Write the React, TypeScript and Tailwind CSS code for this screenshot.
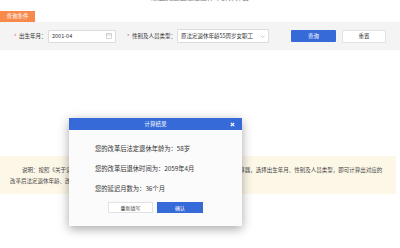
import React from "react";

export default function App() {
  return (
    <div
      className="relative w-[400px] h-[248px] overflow-hidden bg-white text-[#333]"
      style={{ fontFamily: '"Noto Sans CJK SC", "Noto Sans", sans-serif' }}
    >
      {/* title (cut off) */}
      <div className="h-[11px] overflow-hidden flex justify-center">
        <div className="-mt-[7px] text-[7px] leading-[9px] text-[#777]">渐进式延迟法定退休年龄计算器</div>
      </div>

      {/* tab */}
      <div className="w-[35px] h-[11px] bg-[#f7894b] text-white text-[5.5px] leading-[11px] text-center">查询条件</div>

      {/* form panel */}
      <div className="h-[28px] bg-[#f4f4f4] flex items-center text-[5.5px]">
        <span className="ml-[14px] text-[#e4393c] w-[5px]">*</span>
        <span className="w-[29px]">出生年月：</span>
        <div className="w-[68px] h-[13px] bg-white border border-[#dcdcdc] rounded-[1px] flex items-center justify-between px-[3px]">
          <span>2001-04</span>
          <svg width="6" height="6" viewBox="0 0 6 6">
            <rect x="0.5" y="0.5" width="5" height="5" fill="none" stroke="#bbb" strokeWidth="0.6" />
            <line x1="0.5" y1="2" x2="5.5" y2="2" stroke="#bbb" strokeWidth="0.6" />
          </svg>
        </div>
        <span className="ml-[11px] text-[#e4393c] w-[5px]">*</span>
        <span className="w-[45px]">性别及人员类型：</span>
        <div className="w-[92px] h-[14px] bg-white border border-[#dcdcdc] rounded-[1px] flex items-center justify-between px-[3px]">
          <span>原法定退休年龄55周岁女职工</span>
          <svg width="5" height="3" viewBox="0 0 5 3">
            <path d="M0.5 0.5 L2.5 2.5 L4.5 0.5" fill="none" stroke="#aaa" strokeWidth="0.6" />
          </svg>
        </div>
        <div className="ml-[22px] w-[45px] h-[12px] bg-[#356ad8] rounded-[1px] text-white flex items-center justify-center">查询</div>
        <div className="ml-[6px] w-[44px] h-[13px] bg-white border border-[#e2e2e2] rounded-[1px] flex items-center justify-center">重置</div>
      </div>

      {/* spacer */}
      <div className="h-[106px]" />

      {/* notice */}
      <div className="w-[396px] h-[38px] bg-[#fdf7e8] pt-[9px] pl-[10px] pr-[10px] text-[5.5px] leading-[11px] text-[#444]">
        <div className="indent-[12px]">
          说明：按照《关于实施渐进式延迟法定退休年龄的决定》，使用渐进式延迟法定退休年龄计算器，选择出生年月、性别及人员类型，即可计算出对应的
        </div>
        <div>改革后法定退休年龄、改革后退休时间、延迟月数。</div>
      </div>

      {/* modal */}
      <div className="absolute left-[69px] top-[118px] w-[173px] bg-[#fbfbfb] shadow-[0_3px_10px_rgba(0,0,0,0.35)]">
        <div className="relative h-[12px] bg-[#356ad8] text-white text-[5.5px] leading-[12px] text-center">
          计算结果
          <svg className="absolute right-[7px] top-[3.5px]" width="5" height="5" viewBox="0 0 5 5">
            <path d="M0.8 0.8 L4.2 4.2 M4.2 0.8 L0.8 4.2" stroke="white" strokeWidth="1.2" />
          </svg>
        </div>
        <div className="pt-[9px] pb-[13px]">
          <div className="pl-[26px] text-[6.3px] leading-[20px] text-[#333]">
            <div>您的改革后法定退休年龄为：58岁</div>
            <div>您的改革后退休时间为：2059年4月</div>
            <div>您的延迟月数为：36个月</div>
          </div>
          <div className="mt-[3px] flex justify-center gap-[4px] text-[5px]">
            <div className="w-[45px] h-[11px] bg-white border border-[#e2e2e2] flex items-center justify-center text-[#444]">重新填写</div>
            <div className="w-[46px] h-[11px] bg-[#356ad8] text-white flex items-center justify-center">确认</div>
          </div>
        </div>
      </div>
    </div>
  );
}
